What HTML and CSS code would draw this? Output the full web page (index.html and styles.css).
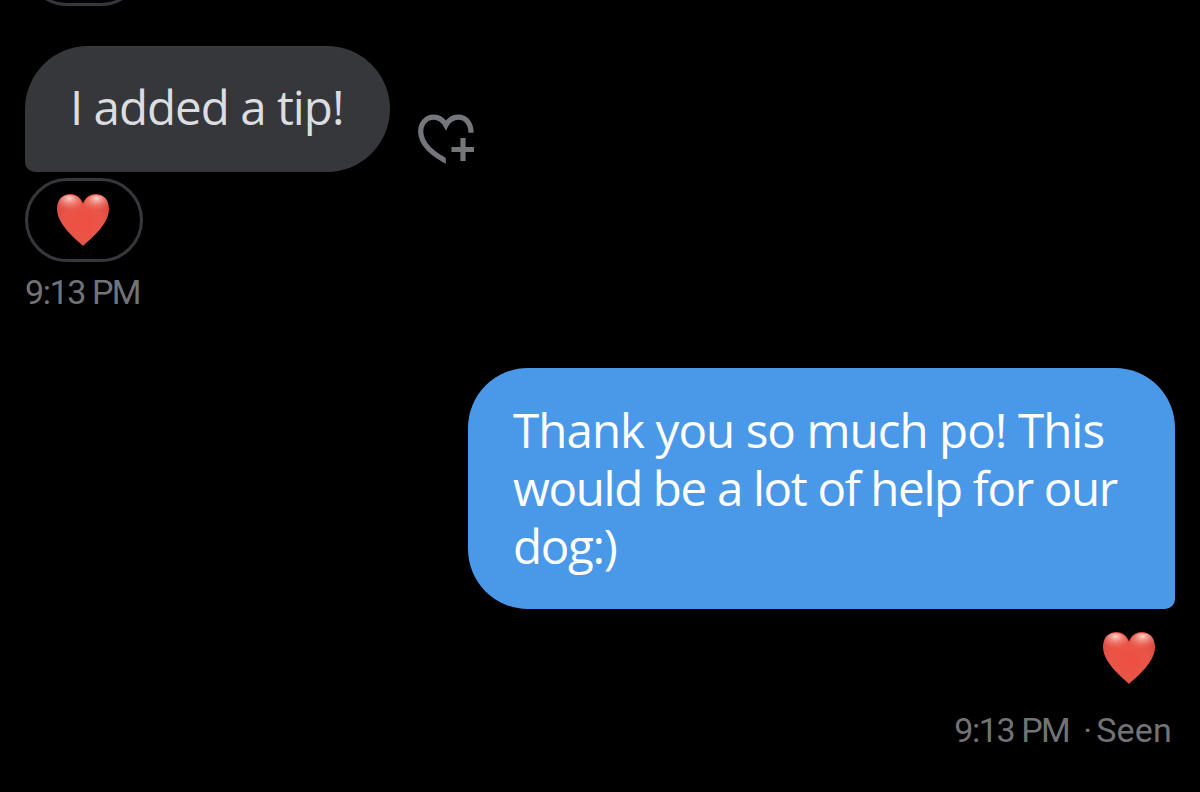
FILE: index.html
```html
<!DOCTYPE html>
<html lang="en">
<head>
<meta charset="utf-8">
<title>Messages</title>
<link rel="stylesheet" href="styles.css">
</head>
<body>
<svg class="defs" aria-hidden="true">
  <defs>
    <radialGradient id="heart-fill" cx="0.5" cy="0.55" r="0.6">
      <stop offset="0" stop-color="#ee4f41"/>
      <stop offset="0.6" stop-color="#e95547"/>
      <stop offset="1" stop-color="#dc4a40"/>
    </radialGradient>
    <radialGradient id="heart-shine" cx="0.5" cy="0.2" r="0.75">
      <stop offset="0" stop-color="#ffe0da" stop-opacity="0.9"/>
      <stop offset="0.45" stop-color="#fba99f" stop-opacity="0.5"/>
      <stop offset="1" stop-color="#f0685c" stop-opacity="0"/>
    </radialGradient>
    <symbol id="heart" viewBox="0 0 52 52">
      <path fill="url(#heart-fill)" d="M26 51.500C25.300 51.500 24.800 51 24 50C17.500 44.500 10.500 38 5.500 30.500C1.800 25 0 20 0 14.500C0 6 6 0 13.500 0C19.500 0 24 4 26 9.500C28 4 32.500 0 38.500 0C46 0 52 6 52 14.500C52 20 50.200 25 46.500 30.500C41.500 38 34.500 44.500 28 50C27.200 51 26.700 51.500 26 51.500Z"/>
      <ellipse fill="url(#heart-shine)" cx="12.500" cy="9.500" rx="11.500" ry="8.500"/>
      <ellipse fill="url(#heart-shine)" cx="39.500" cy="9.500" rx="11.500" ry="8.500"/>
    </symbol>
    <clipPath id="react-clip"><path d="M-2 -2H60V30H27.800V54H-2Z"/></clipPath>
  </defs>
</svg>
<main class="chat">
  <div class="pill pill-previous"></div>
  <section class="message received">
    <div class="row">
      <div class="bubble bubble-in"><span class="line-in">I added a tip!</span></div>
      <svg class="react" viewBox="0 0 58 52" fill="none" stroke="#73767b" stroke-width="5.200">
        <path clip-path="url(#react-clip)" d="M34 50C14 40.500 2.700 29 2.700 17.500C2.700 9 8.500 3.200 15.500 3.200C20.500 3.200 25 6 27.900 11.300C30.800 6 35.200 3.200 40.200 3.200C47.500 3.200 53 9 53 18.700"/>
        <path d="M45 24V47M33.500 35.500H56"/>
      </svg>
    </div>
    <div class="pill"><svg class="heart"><use href="#heart"/></svg></div>
    <div class="time"><span class="clock">9:13</span><span class="meridiem">PM</span></div>
  </section>
  <section class="message sent">
    <div class="bubble bubble-out">
      <span class="line-a">Thank you so much po! This</span><br>
      <span class="line-b">would be a lot of help for our</span><br>
      <span class="line-c">dog:)</span>
    </div>
    <svg class="heart"><use href="#heart"/></svg>
    <div class="time"><span class="clock">9:13</span><span class="meridiem">PM</span><span class="dot">·</span><span class="seen">Seen</span></div>
  </section>
</main>
</body>
</html>
```
FILE: styles.css
```css
* { box-sizing: border-box; }
body {
  margin: 0;
  background: #000;
  font-family: "Open Sans", "Noto Sans", sans-serif;
}
.defs { display: block; width: 0; height: 0; }
.chat {
  height: 792px;
  padding: 0 25px;
  overflow: hidden;
}
.message { display: flex; flex-direction: column; }
.received { margin-top: 40px; align-items: flex-start; }
.sent { margin-top: 56px; align-items: flex-end; }
.row { display: flex; align-items: flex-end; gap: 28px; }
.bubble {
  font-size: 47.5px;
  line-height: 58px;
  white-space: nowrap;
}
.bubble-in {
  width: 365px;
  height: 126px;
  padding: 32px 0 0 45px;
  border-radius: 63px 63px 63px 10px;
  background: #36373a;
  color: #dcdde0;
}
.bubble-out {
  width: 707px;
  height: 241px;
  padding: 33px 0 0 45px;
  border-radius: 60px 60px 10px 60px;
  background: #4a99e9;
  color: #fff;
}
.line-in { letter-spacing: -1px; }
.line-a { letter-spacing: -0.93px; }
.line-b { letter-spacing: -1.34px; }
.line-c { letter-spacing: -1.3px; }
.react { width: 58px; height: 52px; margin-bottom: 6px; }
.pill {
  display: flex;
  justify-content: center;
  width: 118px;
  height: 84px;
  margin-top: 6px;
  padding: 13px 2px 0 0;
  border: 3px solid #36373a;
  border-radius: 42px;
}
.pill-previous { margin-top: -78px; }
.heart { width: 52px; height: 52px; }
.sent .heart { margin: 23px 20px 0 0; }
.time {
  display: flex;
  font-family: Roboto, sans-serif;
  font-size: 34px;
  line-height: 40px;
  color: #717377;
}
.received .time { margin-top: 10px; }
.sent .time { margin: 26px 3px 0 0; }
.clock { width: 61px; letter-spacing: -1.4px; }
.meridiem { width: 46px; margin-left: 6px; letter-spacing: -1.7px; }
.dot { width: 9px; margin: 0 4px 0 16px; }
.seen { letter-spacing: 0.2px; }
```
